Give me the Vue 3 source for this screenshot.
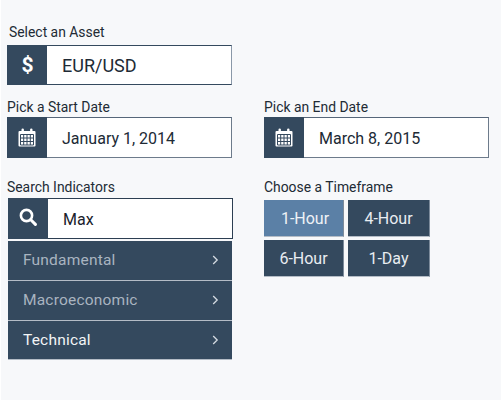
<script setup>
const items = [
  { name: 'Fundamental', dim: true },
  { name: 'Macroeconomic', dim: true },
  { name: 'Technical', dim: false },
]
const frames = [
  { name: '1-Hour', active: true },
  { name: '4-Hour', active: false },
  { name: '6-Hour', active: false },
  { name: '1-Day', active: false },
]
</script>

<template>
  <div class="page">
    <section class="asset">
      <label class="label asset-label">Select an Asset</label>
      <div class="field big">
        <div class="addon"><span class="dollar">$</span></div>
        <div class="value">EUR/USD</div>
      </div>
    </section>

    <div class="cols dates">
      <section>
        <label class="label">Pick a Start Date</label>
        <div class="field gray">
          <div class="addon">
            <svg width="18" height="19" viewBox="0 0 18 19">
              <path fill="#fff" d="M1.5 3h2V1.6a1.2 1.2 0 0 1 2.4 0V3h6.2V1.6a1.2 1.2 0 0 1 2.4 0V3h2a1 1 0 0 1 1 1v13.4a1 1 0 0 1-1 1h-15a1 1 0 0 1-1-1V4a1 1 0 0 1 1-1z"/>
              <path stroke="#34495e" stroke-width="1" fill="none" d="M2.5 6.5h13v10.5h-13zM2.5 10h13M2.5 13.5h13M5.7 6.5V17M9 6.5V17M12.3 6.5V17"/>
            </svg>
          </div>
          <div class="value">January 1, 2014</div>
        </div>
      </section>
      <section>
        <label class="label">Pick an End Date</label>
        <div class="field gray">
          <div class="addon">
            <svg width="18" height="19" viewBox="0 0 18 19">
              <path fill="#fff" d="M1.5 3h2V1.6a1.2 1.2 0 0 1 2.4 0V3h6.2V1.6a1.2 1.2 0 0 1 2.4 0V3h2a1 1 0 0 1 1 1v13.4a1 1 0 0 1-1 1h-15a1 1 0 0 1-1-1V4a1 1 0 0 1 1-1z"/>
              <path stroke="#34495e" stroke-width="1" fill="none" d="M2.5 6.5h13v10.5h-13zM2.5 10h13M2.5 13.5h13M5.7 6.5V17M9 6.5V17M12.3 6.5V17"/>
            </svg>
          </div>
          <div class="value">March 8, 2015</div>
        </div>
      </section>
    </div>

    <div class="cols lower">
      <section>
        <label class="label">Search Indicators</label>
        <div class="field dark">
          <div class="addon search-addon">
            <svg width="18" height="18" viewBox="0 0 18 18">
              <circle cx="7.5" cy="7.5" r="5.6" fill="none" stroke="#fff" stroke-width="2.6"/>
              <path d="M11.8 11.8l4.6 4.6" stroke="#fff" stroke-width="3" stroke-linecap="round"/>
            </svg>
          </div>
          <div class="value search">Max</div>
        </div>
        <ul class="menu">
          <li v-for="item in items" :key="item.name" :class="{ dim: item.dim }">
            <span>{{ item.name }}</span>
            <svg width="7" height="10" viewBox="0 0 7 10"><path d="M1.2 1l4 4-4 4" fill="none" stroke="#d5dbe2" stroke-width="1.3"/></svg>
          </li>
        </ul>
      </section>
      <section>
        <label class="label">Choose a Timeframe</label>
        <div class="frames">
          <button v-for="f in frames" :key="f.name" :class="{ active: f.active }">{{ f.name }}</button>
        </div>
      </section>
    </div>
  </div>
</template>

<style>
html, body { margin: 0; background: #fff; }
</style>

<style scoped>
.page {
  box-sizing: border-box;
  width: 500px;
  height: 400px;
  margin-left: 1px;
  padding: 24px 12px 0 6px;
  background: #f7f8fa;
  font-family: Roboto, "Liberation Sans", sans-serif;
  color: #1f2a36;
}
.label {
  display: block;
  height: 21px;
  font-size: 13.9px;
  line-height: 17px;
  color: #222b35;
}
.asset-label { padding-left: 2px; }
.field {
  box-sizing: border-box;
  display: flex;
  width: 225px;
  height: 41px;
  background: #fff;
  border: 1px solid #34495e;
  border-left: 0;
}
.big { height: 40px; border-right-color: #8a98a8; }
.gray { border-color: #6d7b8b; border-top-color: #566679; }
.dark { margin-left: 1px; border-color: #2c3e52; }
.addon {
  flex: none;
  width: 40px;
  margin: -1px 0;
  background: #34495e;
  display: flex;
  align-items: center;
  justify-content: center;
}
.search-addon svg { margin: -3px 0 0 -1px; }
.dollar { font-weight: 700; font-size: 21px; line-height: 1; color: #fff; padding-left: 1px; }
.value {
  padding-left: 15px;
  font-size: 16px;
  line-height: 41px;
  color: #202a35;
}
.big .value { font-size: 18px; line-height: 40px; }
.search { padding-left: 15px; color: #1a222c; }
.cols {
  display: grid;
  grid-template-columns: 225px 225px;
  column-gap: 32px;
}
.dates { margin-top: 11px; }
.dates .label { line-height: 23px; }
.lower { margin-top: 20px; }
.lower .label { height: 20px; line-height: 19px; }
.menu {
  list-style: none;
  margin: 2px 0 0 1px;
  padding: 0;
  width: 224px;
}
.menu li {
  box-sizing: border-box;
  height: 40px;
  padding: 0 13px 1px 15px;
  background: #34495e;
  border-bottom: 1px solid #b4bcc6;
  display: flex;
  align-items: center;
  justify-content: space-between;
  font-size: 15.5px;
  letter-spacing: 0.2px;
  color: #f2f4f6;
}
.menu li:last-child { height: 39px; }
.menu li.dim span { color: #a9b4c0; }
.frames {
  display: grid;
  grid-template-columns: 80px 82px;
  grid-auto-rows: 37px;
  column-gap: 4px;
  row-gap: 3px;
  margin-top: 2px;
}
button {
  padding: 0;
  border: 0;
  border-right: 1px solid #7d8b9b;
  border-bottom: 1px solid #b4bcc6;
  background: #34495e;
  color: #e9edf1;
  font: 16px Roboto, sans-serif;
}
button.active {
  padding-left: 3px;
  background: #5b80a6;
  color: #eef2f6;
}
</style>
